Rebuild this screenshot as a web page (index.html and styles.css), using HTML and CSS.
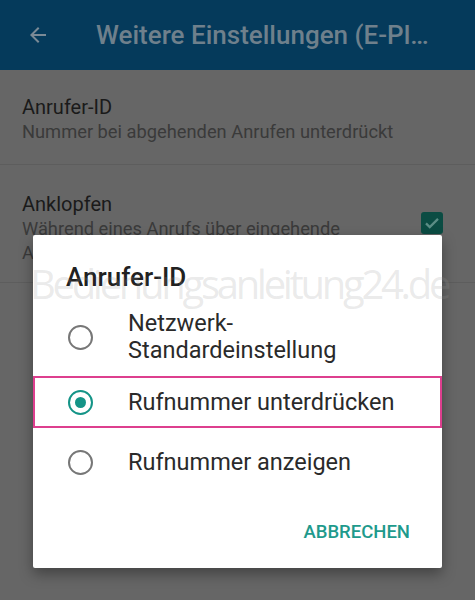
FILE: index.html
```html
<!DOCTYPE html>
<html lang="de">
    <head>
        <meta charset="UTF-8" />
        <meta name="viewport" content="width=device-width, initial-scale=1.0" />
        <title>Anrufer-ID</title>
        <link rel="stylesheet" href="styles.css">
    </head>
    <body>
        <header class="appbar">
            <svg class="back" width="24" height="24" viewBox="0 0 24 24">
                <path d="M20 11H7.83l5.59-5.59L12 4l-8 8 8 8 1.41-1.41L7.83 13H20v-2z" />
            </svg>
            <span class="appbar-title">Weitere Einstellungen (E-Pl…</span>
        </header>

        <div class="prefs">
            <div class="pref">
                <div class="pref-text">
                    <div class="pref-title">Anrufer-ID</div>
                    <div class="pref-summary">Nummer bei abgehenden Anrufen unterdrückt</div>
                </div>
            </div>
            <div class="pref">
                <div class="pref-text">
                    <div class="pref-title">Anklopfen</div>
                    <div class="pref-summary">Während eines Anrufs über eingehende Anrufe benachrichtigen</div>
                </div>
                <span class="checkbox">
                    <svg width="18" height="18" viewBox="0 0 24 24">
                        <path d="M4 12.5l5 5L20 6.5" />
                    </svg>
                </span>
            </div>
        </div>

        <div class="dialog">
            <div class="dialog-title">Anrufer-ID</div>
            <div class="choices">
                <div class="choice choice-tall">
                    <span class="radio"></span>
                    <span class="choice-label">Netzwerk-<br>Standardeinstellung</span>
                </div>
                <div class="choice marked">
                    <span class="radio checked"></span>
                    <span class="choice-label">Rufnummer unterdrücken</span>
                </div>
                <div class="choice">
                    <span class="radio"></span>
                    <span class="choice-label">Rufnummer anzeigen</span>
                </div>
            </div>
            <div class="dialog-actions">
                <span class="action">ABBRECHEN</span>
            </div>
        </div>

        <div class="watermark">Bedienungsanleitung24.de</div>
    </body>
</html>
```

FILE: styles.css
```css
* {
    box-sizing: border-box;
}

body {
    margin: 0;
    width: 475px;
    height: 600px;
    overflow: hidden;
    position: relative;
    background: #666666;
    font-family: Roboto, "Noto Sans", sans-serif;
}

.appbar {
    height: 70px;
    background: #053a5b;
    display: flex;
    align-items: center;
    padding-left: 26px;
    gap: 46px;
}

.back {
    fill: #7b8a96;
}

.appbar-title {
    color: #6f808c;
    font-size: 26px;
    font-weight: 500;
    white-space: nowrap;
}

.pref {
    display: flex;
    align-items: center;
    padding: 0 32px 0 22px;
    border-bottom: 1px solid #5d5d5d;
}

.pref:first-child {
    height: 95px;
    padding-top: 4px;
}

.pref:nth-child(2) {
    height: 118px;
    align-items: flex-start;
    padding-top: 26px;
}

.pref-text {
    flex: 1;
}

.pref-title {
    font-size: 20px;
    color: #1a1a1a;
    line-height: 26px;
}

.pref-summary {
    font-size: 18.3px;
    color: #3a3a3a;
    line-height: 24px;
}

.pref:nth-child(2) .pref-summary {
    width: 340px;
}

.checkbox {
    width: 22px;
    height: 22px;
    margin-top: 21px;
    border-radius: 3px;
    background: #0b4c43;
    display: flex;
    align-items: center;
    justify-content: center;
}

.checkbox path {
    fill: none;
    stroke: #5b8d85;
    stroke-width: 3;
}

.dialog {
    position: absolute;
    left: 33px;
    top: 235px;
    width: 409px;
    height: 333px;
    background: #ffffff;
    border-radius: 2px;
    box-shadow: 0 6px 14px rgba(0, 0, 0, 0.35);
    display: flex;
    flex-direction: column;
}

.dialog-title {
    padding: 26px 0 0 33px;
    font-size: 26px;
    font-weight: 500;
    color: #212121;
    line-height: 32px;
}

.choices {
    margin-top: 9px;
}

.choice {
    display: flex;
    align-items: center;
    height: 60px;
    padding-left: 35px;
    gap: 35px;
}

.choice-tall {
    height: 70px;
}

.choice.marked {
    box-shadow: inset 0 0 0 2px #dd3f8e;
    height: 52px;
    margin: 4px 0;
}

.choice-label {
    font-size: 23.5px;
    color: #2a2a2a;
    line-height: 27px;
}

.radio {
    width: 25px;
    height: 25px;
    border: 2.5px solid #777777;
    border-radius: 50%;
    flex: none;
    display: flex;
    align-items: center;
    justify-content: center;
}

.radio.checked {
    border-color: #149487;
}

.radio.checked::after {
    content: "";
    width: 11px;
    height: 11px;
    border-radius: 50%;
    background: #149487;
}

.dialog-actions {
    display: flex;
    justify-content: flex-end;
    padding: 29px 32px 0 0;
}

.action {
    font-size: 18.5px;
    font-weight: 500;
    color: #1e9a8c;
}

.watermark {
    position: absolute;
    left: 30px;
    top: 264px;
    font-family: "Open Sans", sans-serif;
    font-size: 40px;
    line-height: 40px;
    letter-spacing: -3.3px;
    color: rgba(150, 150, 150, 0.2);
    white-space: nowrap;
    pointer-events: none;
}
```
